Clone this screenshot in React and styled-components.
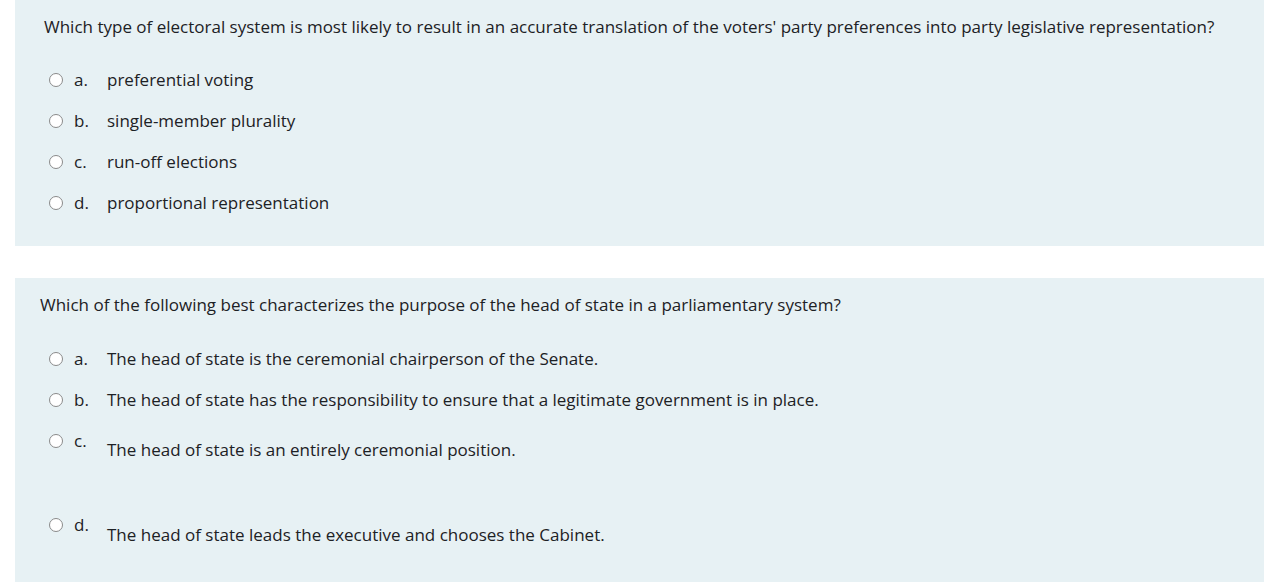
import { createGlobalStyle, styled } from "styled-components";

const GlobalStyle = createGlobalStyle`
  body {
    margin: 0;
    background: #fff;
    font-family: "Open Sans", "Noto Sans", sans-serif;
    color: #1d2125;
  }
`;

const Page = styled.div`
  display: flex;
  flex-direction: column;
  gap: 32px;
  padding-left: 15px;
`;

const Panel = styled.div`
  background-color: #e7f1f4;
  padding: ${(p) => p.$pad};
  min-height: ${(p) => p.$minH};
  box-sizing: border-box;
`;

const Question = styled.div`
  font-size: 17px;
  line-height: 22px;
  padding-left: ${(p) => p.$indent}px;
  margin-bottom: ${(p) => p.$gap}px;
`;

const Options = styled.div`
  display: flex;
  flex-direction: column;
  padding-left: 34px;
`;

const Option = styled.label`
  display: flex;
  align-items: flex-start;
  min-height: 41px;
  font-size: 17px;
  line-height: 22px;
  margin-bottom: ${(p) => p.$extra || 0}px;
`;

const Radio = styled.span`
  width: 14px;
  height: 14px;
  border-radius: 50%;
  border: 1.5px solid #8a8a8a;
  background: #fff;
  box-sizing: border-box;
  margin-top: 4px;
  flex-shrink: 0;
`;

const Letter = styled.span`
  width: 33px;
  padding-left: 11px;
  flex-shrink: 0;
`;

const Answer = styled.span`
  padding-top: ${(p) => p.$drop || 0}px;
`;

const questions = [
  {
    text:
      "Which type of electoral system is most likely to result in an accurate translation of the voters' party preferences into party legislative representation?",
    indent: 29,
    pad: "16px 0 12px 0",
    gap: 31,
    minH: "246px",
    options: [
      { l: "a.", t: "preferential voting" },
      { l: "b.", t: "single-member plurality" },
      { l: "c.", t: "run-off elections" },
      { l: "d.", t: "proportional representation" },
    ],
  },
  {
    text:
      "Which of the following best characterizes the purpose of the head of state in a parliamentary system?",
    indent: 25,
    pad: "16px 0 0 0",
    gap: 32,
    minH: "304px",
    options: [
      { l: "a.", t: "The head of state is the ceremonial chairperson of the Senate." },
      { l: "b.", t: "The head of state has the responsibility to ensure that a legitimate government is in place." },
      { l: "c.", t: "The head of state is an entirely ceremonial position.", drop: 9, extra: 43 },
      { l: "d.", t: "The head of state leads the executive and chooses the Cabinet.", drop: 10 },
    ],
  },
];

export default function App() {
  return (
    <>
      <GlobalStyle />
      <Page>
        {questions.map((q, i) => (
          <Panel key={i} $pad={q.pad} $minH={q.minH}>
            <Question $indent={q.indent} $gap={q.gap}>
              {q.text}
            </Question>
            <Options>
              {q.options.map((o) => (
                <Option key={o.l} $extra={o.extra}>
                  <Radio />
                  <Letter>{o.l}</Letter>
                  <Answer $drop={o.drop}>{o.t}</Answer>
                </Option>
              ))}
            </Options>
          </Panel>
        ))}
      </Page>
    </>
  );
}
